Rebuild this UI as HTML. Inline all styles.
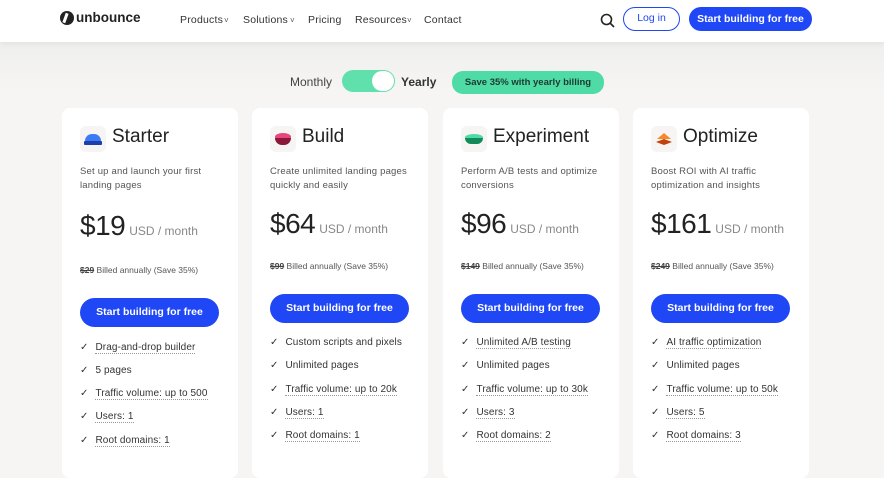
<!DOCTYPE html>
<html style="background:#f6f5f4"><head><meta charset="utf-8">
<style>
*{margin:0;padding:0;box-sizing:border-box}
body{width:884px;height:465px;overflow:hidden;background:#f6f5f4;font-family:"Liberation Sans",sans-serif;color:#222;position:relative}
.grad{position:absolute;left:0;top:42px;width:884px;height:50px;background:linear-gradient(#efefee,#f6f5f4)}
.hdr{position:absolute;left:0;top:0;width:884px;height:42px;background:#fff;box-shadow:0 2px 6px rgba(0,0,0,.06)}
.a{position:absolute;white-space:nowrap}
.nav{font-size:10.5px;color:#333;top:14px;letter-spacing:.2px}
.car{font-size:8px;color:#555;top:16px}
.card{position:absolute;top:108px;width:176px;height:370px;background:#fff;border-radius:8px}
.ic{position:absolute;left:18px;top:18px;width:26px;height:26px;border-radius:6px;background:#f7f5f3}
.title{position:absolute;left:50px;top:18px;font-size:19px;color:#222}
.desc{position:absolute;left:18px;top:57px;font-size:9.5px;line-height:14px;color:#555;width:132px;letter-spacing:.2px}
.price{position:absolute;left:18px;font-size:28px;color:#222;letter-spacing:-.5px}
.price span{font-size:12px;color:#888;letter-spacing:0;margin-left:4px}
.bill{position:absolute;left:18px;font-size:8.5px;color:#555}
.bill s{color:#444;font-weight:bold}
.btn{position:absolute;left:18px;width:139px;height:29px;border-radius:15px;background:#1f47f5;color:#fff;font-size:10.5px;font-weight:bold;text-align:center;line-height:29px}
.f{position:absolute;left:18px;font-size:10px;color:#333;letter-spacing:.1px}
.f b{font-weight:normal;margin-right:7px}
.u{border-bottom:1px dotted #999}
</style></head><body>
<div class="grad"></div>
<div class="hdr">
 <div class="a" style="left:60px;top:11px;width:14px;height:14px;border-radius:7px;background:#222"></div>
 <div class="a" style="left:64px;top:13px;width:3px;height:10px;background:#fff;transform:rotate(20deg)"></div>
 <div class="a" style="left:76px;top:10px;font-size:13.5px;font-weight:bold;color:#222">unbounce</div>
 <div class="a nav" style="left:180px">Products</div><div class="a car" style="left:224px">˅</div>
 <div class="a nav" style="left:243px">Solutions</div><div class="a car" style="left:290px">˅</div>
 <div class="a nav" style="left:308px">Pricing</div>
 <div class="a nav" style="left:355px">Resources</div><div class="a car" style="left:407px">˅</div>
 <div class="a nav" style="left:424px">Contact</div>
 <svg class="a" style="left:600px;top:13px" width="16" height="16" viewBox="0 0 16 16"><circle cx="6.5" cy="6.5" r="5" fill="none" stroke="#222" stroke-width="1.6"/><path d="M10 10l4 4" stroke="#222" stroke-width="1.6"/></svg>
 <div class="a" style="left:623px;top:7px;width:57px;height:24px;border:1.5px solid #1f47f5;border-radius:12px;color:#1f47f5;font-size:10.5px;text-align:center;line-height:21px">Log in</div>
 <div class="a" style="left:689px;top:7px;width:123px;height:24px;background:#1f47f5;border-radius:12px;color:#fff;font-size:10.5px;font-weight:bold;text-align:center;line-height:24px">Start building for free</div>
</div>
<div class="a" style="left:290px;top:75px;font-size:12px;color:#444">Monthly</div>
<div class="a" style="left:342px;top:70px;width:53px;height:22px;border-radius:11px;background:#5fe0ad"></div>
<div class="a" style="left:372px;top:71px;width:22px;height:20px;border-radius:10px;background:#fff"></div>
<div class="a" style="left:401px;top:75px;font-size:12px;font-weight:bold;color:#333">Yearly</div>
<div class="a" style="left:452px;top:71px;width:152px;height:23px;border-radius:11px;background:#4fdba6;font-size:9.5px;font-weight:bold;color:#1c3a30;text-align:center;line-height:23px">Save 35% with yearly billing</div>

<div class="card" style="left:62px">
 <div class="ic"><div class="a" style="left:5px;top:8px;width:16px;height:7px;border-radius:8px 8px 0 0;background:#3b7bf5"></div><div class="a" style="left:4px;top:15px;width:18px;height:4px;background:#1c3faa;border-radius:1px"></div></div>
 <div class="title">Starter</div>
 <div class="desc">Set up and launch your first landing pages</div>
 <div class="price" style="top:102px">$19<span>USD / month</span></div>
 <div class="bill" style="top:157px"><s>$29</s> Billed annually (Save 35%)</div>
 <div class="btn" style="top:190px">Start building for free</div>
 <div class="f" style="top:234px"><b>✓</b><span class="u">Drag-and-drop builder</span></div>
 <div class="f" style="top:257px"><b>✓</b>5 pages</div>
 <div class="f" style="top:280px"><b>✓</b><span class="u">Traffic volume: up to 500</span></div>
 <div class="f" style="top:303px"><b>✓</b><span class="u">Users: 1</span></div>
 <div class="f" style="top:327px"><b>✓</b><span class="u">Root domains: 1</span></div>
</div>
<div class="card" style="left:252px">
 <div class="ic"><div class="a" style="left:5px;top:7px;width:16px;height:8px;background:#e8457e;border-radius:50%"></div><div class="a" style="left:5px;top:12px;width:16px;height:7px;background:#8a1838;border-radius:0 0 8px 8px"></div></div>
 <div class="title">Build</div>
 <div class="desc" style="width:145px">Create unlimited landing pages quickly and easily</div>
 <div class="price" style="top:100px">$64<span>USD / month</span></div>
 <div class="bill" style="top:153px"><s>$99</s> Billed annually (Save 35%)</div>
 <div class="btn" style="top:186px">Start building for free</div>
 <div class="f" style="top:229px"><b>✓</b>Custom scripts and pixels</div>
 <div class="f" style="top:252px"><b>✓</b>Unlimited pages</div>
 <div class="f" style="top:276px"><b>✓</b><span class="u">Traffic volume: up to 20k</span></div>
 <div class="f" style="top:299px"><b>✓</b><span class="u">Users: 1</span></div>
 <div class="f" style="top:322px"><b>✓</b><span class="u">Root domains: 1</span></div>
</div>
<div class="card" style="left:443px">
 <div class="ic"><div class="a" style="left:4px;top:8px;width:18px;height:7px;background:#4fdba6;border-radius:50%"></div><div class="a" style="left:4px;top:12px;width:18px;height:6px;background:#128a5a;border-radius:0 0 9px 9px"></div></div>
 <div class="title">Experiment</div>
 <div class="desc" style="width:145px">Perform A/B tests and optimize conversions</div>
 <div class="price" style="top:100px">$96<span>USD / month</span></div>
 <div class="bill" style="top:153px"><s>$149</s> Billed annually (Save 35%)</div>
 <div class="btn" style="top:186px">Start building for free</div>
 <div class="f" style="top:229px"><b>✓</b><span class="u">Unlimited A/B testing</span></div>
 <div class="f" style="top:252px"><b>✓</b>Unlimited pages</div>
 <div class="f" style="top:276px"><b>✓</b><span class="u">Traffic volume: up to 30k</span></div>
 <div class="f" style="top:299px"><b>✓</b><span class="u">Users: 3</span></div>
 <div class="f" style="top:322px"><b>✓</b><span class="u">Root domains: 2</span></div>
</div>
<div class="card" style="left:633px">
 <div class="ic"><div class="a" style="left:6px;top:7px;width:0;height:0;border-left:7px solid transparent;border-right:7px solid transparent;border-bottom:6px solid #f58a2a"></div><div class="a" style="left:5px;top:13px;width:16px;height:6px;background:#c2410c;clip-path:polygon(0 50%,50% 0,100% 50%,50% 100%)"></div></div>
 <div class="title">Optimize</div>
 <div class="desc" style="width:125px">Boost ROI with AI traffic optimization and insights</div>
 <div class="price" style="top:100px">$161<span>USD / month</span></div>
 <div class="bill" style="top:153px"><s>$249</s> Billed annually (Save 35%)</div>
 <div class="btn" style="top:186px">Start building for free</div>
 <div class="f" style="top:229px"><b>✓</b><span class="u">AI traffic optimization</span></div>
 <div class="f" style="top:252px"><b>✓</b>Unlimited pages</div>
 <div class="f" style="top:276px"><b>✓</b><span class="u">Traffic volume: up to 50k</span></div>
 <div class="f" style="top:299px"><b>✓</b><span class="u">Users: 5</span></div>
 <div class="f" style="top:322px"><b>✓</b><span class="u">Root domains: 3</span></div>
</div>
</body></html>
